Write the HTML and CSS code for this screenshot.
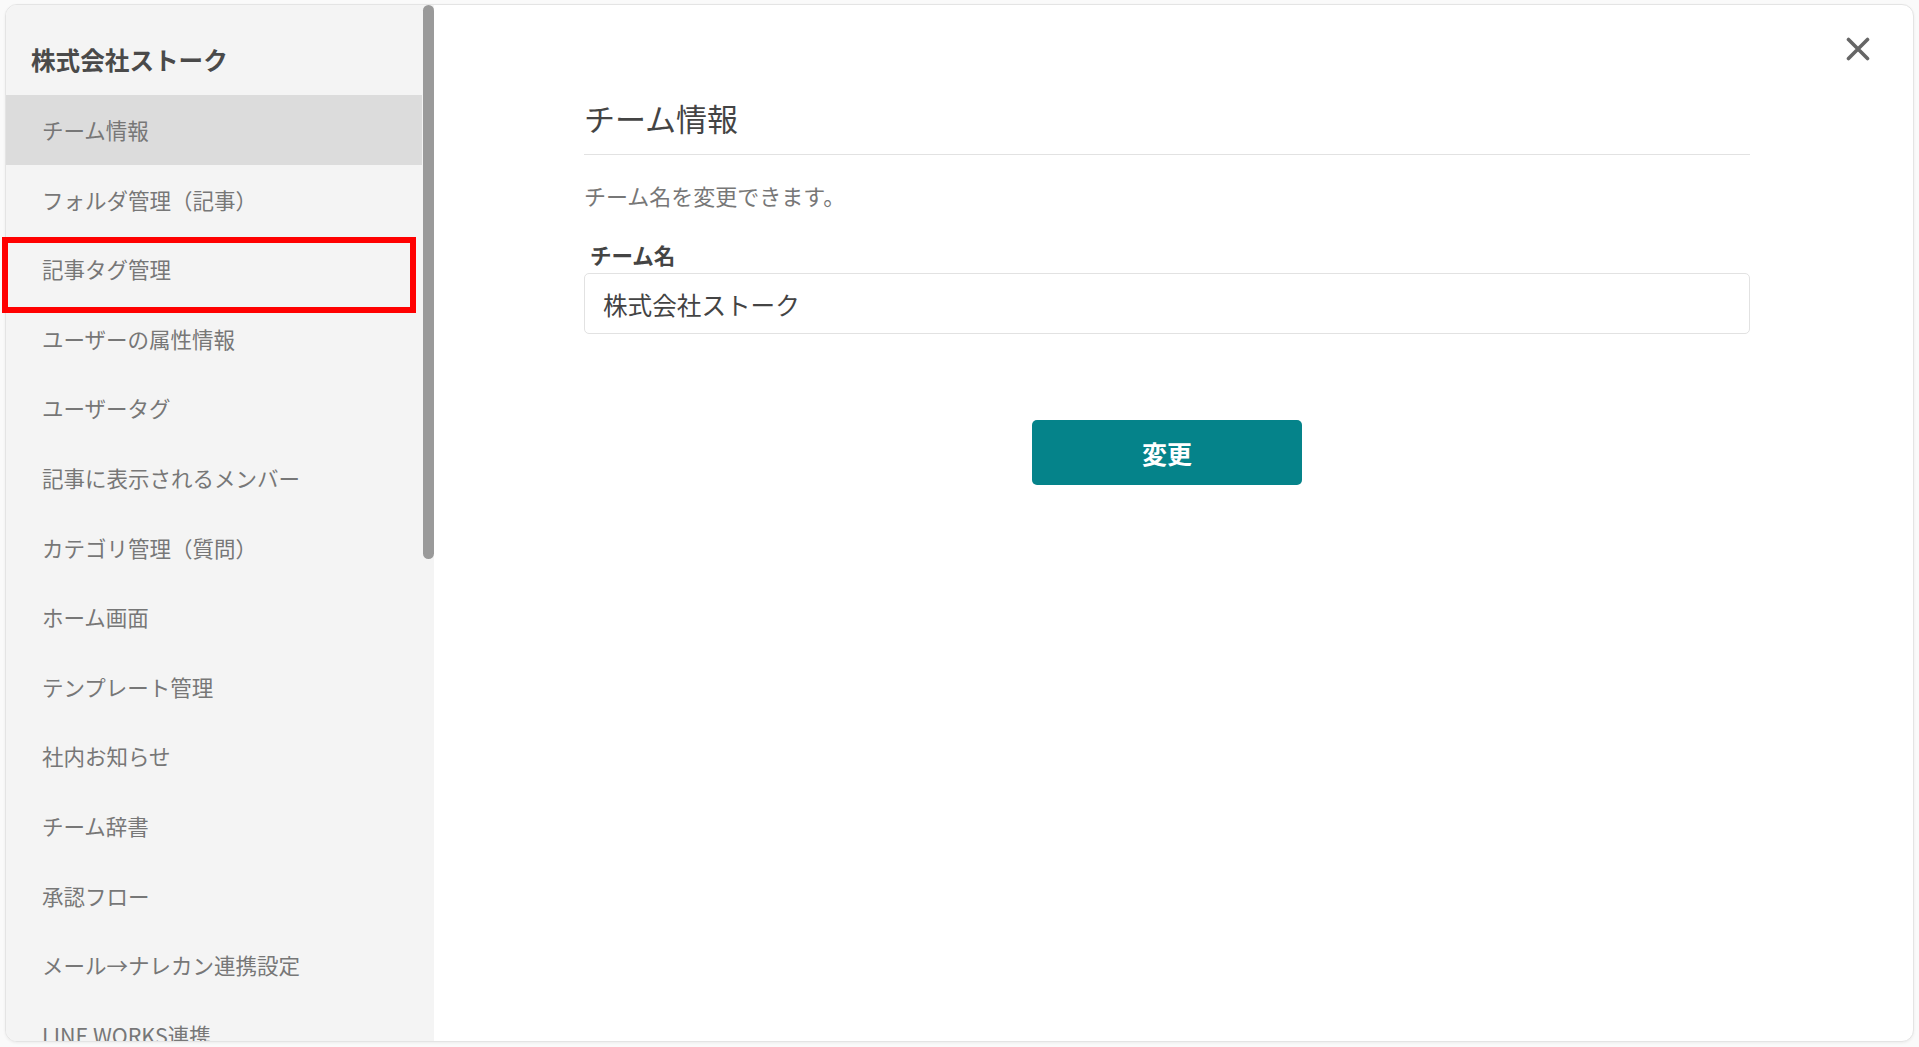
FILE: index.html
```html
<!DOCTYPE html>
<html lang="ja">
<head>
    <meta charset="utf-8">
    <title>チーム設定</title>
    <link rel="stylesheet" href="styles.css">
</head>
<body>

<div class="modal">
    <nav class="settings-nav">
        <div class="team-name">株式会社ストーク</div>
        <ul class="nav-list">
            <li class="nav-item active">チーム情報</li>
            <li class="nav-item">フォルダ管理（記事）</li>
            <li class="nav-item">記事タグ管理</li>
            <li class="nav-item">ユーザーの属性情報</li>
            <li class="nav-item">ユーザータグ</li>
            <li class="nav-item">記事に表示されるメンバー</li>
            <li class="nav-item">カテゴリ管理（質問）</li>
            <li class="nav-item">ホーム画面</li>
            <li class="nav-item">テンプレート管理</li>
            <li class="nav-item">社内お知らせ</li>
            <li class="nav-item">チーム辞書</li>
            <li class="nav-item">承認フロー</li>
            <li class="nav-item">メール→ナレカン連携設定</li>
            <li class="nav-item">LINE WORKS連携</li>
        </ul>
        <!-- scrollbar thumb drawn over the menu -->
        <div class="scroll-thumb"></div>
    </nav>

    <main class="settings-content">
        <button class="close-button" aria-label="閉じる">
            <svg width="24" height="24" viewBox="0 0 24 24">
                <path d="M2.5 2.5 L21.5 21.5 M21.5 2.5 L2.5 21.5" stroke="#666" stroke-width="3.6" stroke-linecap="round" fill="none"/>
            </svg>
        </button>

        <h1 class="section-title">チーム情報</h1>
        <p class="section-desc">チーム名を変更できます。</p>

        <label class="field-label" for="teamName">チーム名</label>
        <input class="text-input" id="teamName" type="text" value="株式会社ストーク">

        <div class="actions">
            <button class="primary-button">変更</button>
        </div>
    </main>
</div>

<!-- annotation -->
<div class="highlight-box"></div>

</body>
</html>
```

FILE: styles.css
```css
* { margin: 0; padding: 0; box-sizing: border-box; }

body {
    font-family: "Noto Sans CJK JP", "Noto Sans", sans-serif;
    background: #fafafa;
    height: 100vh;
    overflow: hidden;
}

/* Modal frame */
.modal {
    margin: 4px 5px 5px 5px;
    height: 1038px;
    background: #fff;
    border: 1px solid #e4e4e4;
    border-radius: 12px;
    box-shadow: 0 1px 3px rgba(0, 0, 0, 0.06);
    display: flex;
    overflow: hidden;
}

/* Left settings menu */
.settings-nav {
    width: 428px;
    flex-shrink: 0;
    background: #f4f4f4;
    overflow: hidden;
    position: relative;
    padding-right: 12px;
}

.scroll-thumb {
    position: absolute;
    top: 0;
    right: 0;
    width: 11px;
    height: 554px;
    background: #9a9a9a;
    border-radius: 6px;
}

.team-name {
    height: 90px;
    padding-left: 25px;
    padding-top: 36px;
    font-size: 24.6px;
    font-weight: 700;
    color: #4a4a4a;
    line-height: 36px;
    white-space: nowrap;
}

.nav-list {
    list-style: none;
}

.nav-item {
    height: 69.6px;
    line-height: 69.6px;
    padding-left: 36px;
    font-size: 21.5px;
    color: #777;
    white-space: nowrap;
    cursor: pointer;
}

.nav-item.active {
    background: #dcdcdc;
}

/* Right content */
.settings-content {
    flex: 1;
    position: relative;
    padding: 92px 163px 0 150px;
}

.close-button {
    position: absolute;
    top: 32px;
    right: 43px;
    width: 24px;
    height: 24px;
    border: none;
    background: none;
    cursor: pointer;
}

.close-button svg {
    display: block;
}

.section-title {
    font-size: 31px;
    font-weight: 400;
    color: #444;
    line-height: 42px;
    padding-bottom: 15px;
    border-bottom: 1px solid #e2e2e2;
}

.section-desc {
    margin-top: 24px;
    font-size: 22px;
    color: #777;
    line-height: 32px;
}

.field-label {
    display: block;
    margin-top: 29px;
    padding-left: 6px;
    font-size: 21.5px;
    font-weight: 700;
    color: #444;
    line-height: 30px;
}

.text-input {
    display: block;
    width: 100%;
    height: 61px;
    margin-top: 3px;
    padding: 0 18px;
    border: 1px solid #e2e2e2;
    border-radius: 5px;
    font-family: inherit;
    font-size: 24.6px;
    color: #444;
    outline: none;
}

.actions {
    display: flex;
    justify-content: center;
    margin-top: 86px;
}

.primary-button {
    width: 270px;
    height: 65px;
    background: #05838a;
    color: #fff;
    border: none;
    border-radius: 5px;
    font-family: inherit;
    font-size: 25px;
    font-weight: 700;
    cursor: pointer;
}

/* Red annotation box over the menu */
.highlight-box {
    position: absolute;
    left: 2px;
    top: 237px;
    width: 414px;
    height: 76px;
    border: 6px solid #ff0000;
    pointer-events: none;
}
```
